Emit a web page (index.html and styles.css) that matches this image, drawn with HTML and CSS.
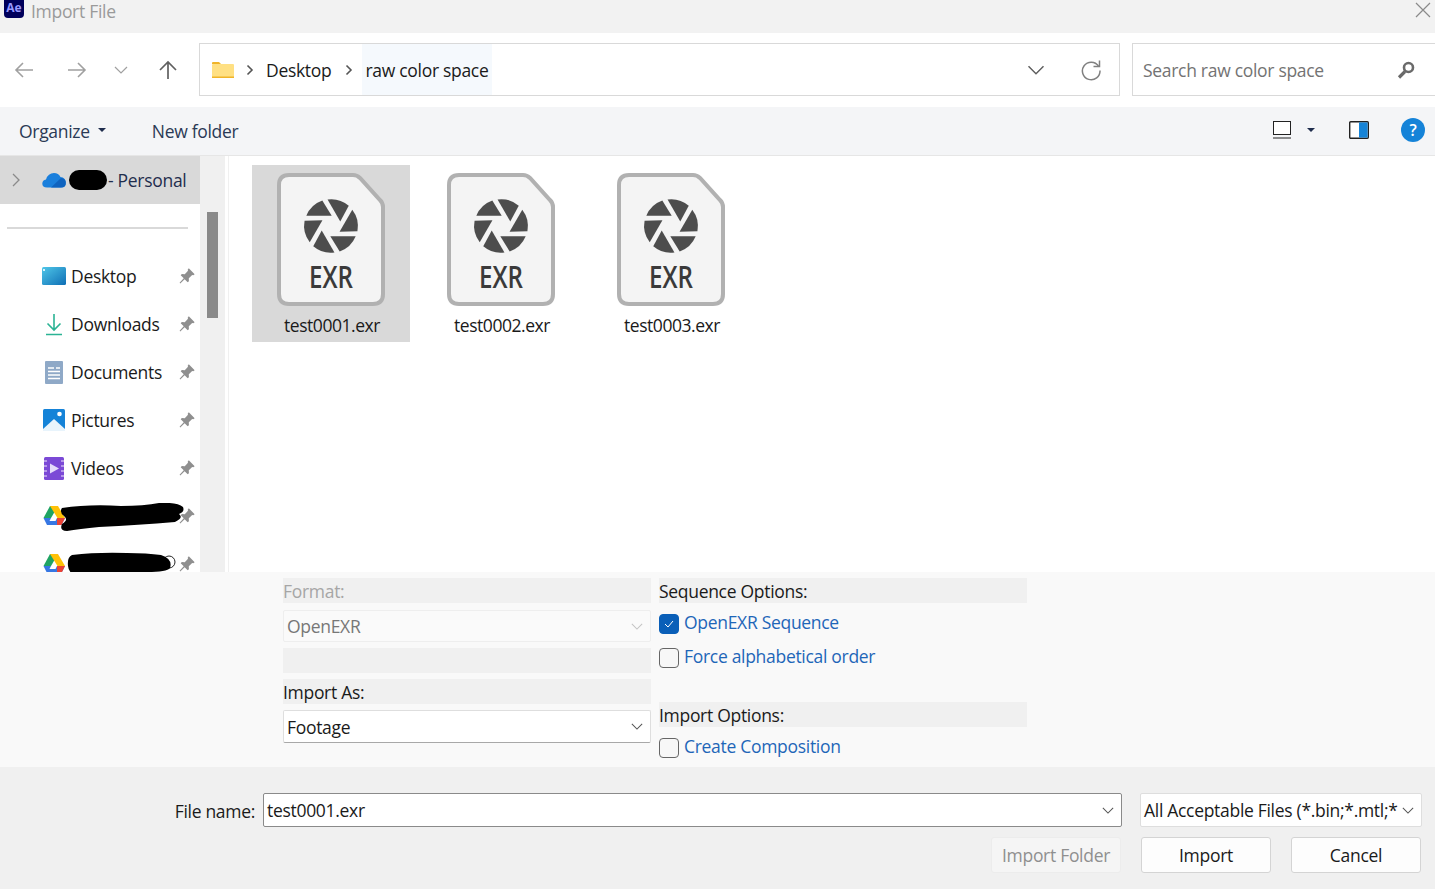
FILE: index.html
```html
<!DOCTYPE html>
<html lang="en">
<head>
    <meta charset="UTF-8">
    <title>Import File</title>
    <link rel="stylesheet" href="styles.css">
</head>
<body>
    <svg class="defs" width="0" height="0">
        <symbol id="pin" viewBox="0 0 16 16">
            <path d="M9.6 1.2 14.8 6.4 13.6 7.4 12.6 7.1 9.6 10 9.7 12.6 8.6 13.6 5.9 10.9 2 14.6 1.4 14 5.1 10.1 2.4 7.4 3.4 6.3 6 6.4 8.9 3.4 8.6 2.4Z" fill="#8f8f8f"/>
        </symbol>
        <symbol id="chev" viewBox="0 0 14 8">
            <path d="M1 1 7 7 13 1" fill="none" stroke="currentColor" stroke-width="1.2"/>
        </symbol>
        <symbol id="crumb" viewBox="0 0 8 12">
            <path d="M1.5 1.5 6 6 1.5 10.5" fill="none" stroke="#555" stroke-width="1.6"/>
        </symbol>
        <symbol id="drive" viewBox="0 0 24 22">
            <path d="M8 1h8L9 13H1.5Z" fill="#1fa463"/>
            <path d="M8 1h8l7 12h-7.500Z" fill="#ffc107"/>
            <path d="M1.500 13 5 20h5l3-7Z" fill="#3777e3"/>
            <path d="M5 20h14.500L23 13H9Z" fill="#3777e3"/>
            <path d="M15 13h8l-3.500 7H15Z" fill="#ea4335"/>
            <path d="M9 13h6l-1.500 3H7.500Z" fill="#fff"/>
        </symbol>
        <symbol id="exr" viewBox="0 0 108 133">
            <path d="M12 2H76Q80 2 83 5L103 27Q106 30 106 34V121Q106 131 96 131H12Q2 131 2 121V12Q2 2 12 2Z" fill="#f4f4f4" stroke="#b1b1b1" stroke-width="4"/>
            <g transform="translate(54 53)" fill="#4d4d4d">
                <path id="blade" d="M-24.700 -10.300A27 27 0 0 1 -8.700 -25.500L.7 -10.300Z"/>
                <use href="#blade" transform="rotate(60)"/>
                <use href="#blade" transform="rotate(120)"/>
                <use href="#blade" transform="rotate(180)"/>
                <use href="#blade" transform="rotate(240)"/>
                <use href="#blade" transform="rotate(300)"/>
            </g>
        </symbol>
    </svg>

    <header class="titlebar">
        <span class="ae-logo">Ae</span>
        <span class="title">Import File</span>
        <svg class="close" width="18" height="18" viewBox="0 0 18 18"><path d="M2 2 16 16M16 2 2 16" stroke="#8a8a8a" stroke-width="1.200"/></svg>
    </header>

    <div class="addressrow">
        <nav class="navbtns">
            <svg class="nav-back" width="20" height="18" viewBox="0 0 20 18"><path d="M19 9H2M9 2 2 9l7 7" fill="none" stroke="#a0a0a0" stroke-width="1.600"/></svg>
            <svg class="nav-fwd" width="20" height="18" viewBox="0 0 20 18"><path d="M1 9h17M11 2l7 7-7 7" fill="none" stroke="#a0a0a0" stroke-width="1.600"/></svg>
            <svg class="nav-drop" width="14" height="8"><use href="#chev" color="#a0a0a0"/></svg>
            <svg class="nav-up" width="20" height="20" viewBox="0 0 20 20"><path d="M10 19V2M2 10l8-8 8 8" fill="none" stroke="#606060" stroke-width="1.700"/></svg>
        </nav>
        <div class="addressbar">
            <svg class="folder" width="24" height="18" viewBox="0 0 24 18">
                <path d="M1 2q0-1 1-1h6l2 2h-9Z" fill="#f0b429"/>
                <rect x="1" y="3" width="22" height="14" rx="1" fill="#ffe083"/>
                <rect x="1" y="15.500" width="22" height="1.500" fill="#f0b429"/>
            </svg>
            <svg class="crumb-sep" width="8" height="12"><use href="#crumb"/></svg>
            <span class="crumb">Desktop</span>
            <svg class="crumb-sep" width="8" height="12"><use href="#crumb"/></svg>
            <span class="crumb crumb-current">raw color space</span>
            <svg class="addr-drop" width="18" height="10" viewBox="0 0 14 8"><use href="#chev" color="#606060"/></svg>
            <svg class="refresh" width="22" height="22" viewBox="0 0 22 22"><path d="M18.500 7A8.800 8.800 0 1 0 20 11.500" fill="none" stroke="#808080" stroke-width="1.500"/><path d="M19.500 1.500V7.500H13.500" fill="none" stroke="#808080" stroke-width="1.500"/></svg>
        </div>
        <div class="searchbar">
            <span>Search raw color space</span>
            <svg width="18" height="18" viewBox="0 0 18 18"><circle cx="11.500" cy="6.500" r="4.500" fill="none" stroke="#6a6a6a" stroke-width="2.600"/><path d="M8 10.500 2 16.500" stroke="#6a6a6a" stroke-width="3.200"/></svg>
        </div>
    </div>

    <div class="toolbar">
        <span class="tool organize">Organize</span>
        <span class="caret"></span>
        <span class="tool newfolder">New folder</span>
        <svg class="view-icon" width="18" height="18" viewBox="0 0 18 18"><rect x=".5" y=".5" width="17" height="13" fill="#fff" stroke="#222"/><path d="M0 17H18" stroke="#222"/></svg>
        <span class="caret view-caret"></span>
        <svg class="pane-icon" width="20" height="18" viewBox="0 0 20 18"><rect x=".7" y=".7" width="18.600" height="16.600" rx="1" fill="#fff" stroke="#222" stroke-width="1.400"/><rect x="10" y="1.400" width="8.600" height="15.200" fill="#1684d8"/></svg>
        <span class="help">?</span>
    </div>

    <main class="browser">
        <aside class="sidebar">
            <div class="side-row side-selected">
                <svg class="expander" width="8" height="14" viewBox="0 0 8 14"><path d="M1 1 7 7 1 13" fill="none" stroke="#8a8a8a" stroke-width="1.300"/></svg>
                <svg class="side-icon" width="24" height="16" viewBox="0 0 24 16"><path d="M5 15.500Q.2 15.500 .3 11.500 .5 8 4 7.500 6 1 12 1q4.500 0 6.500 4 5 .5 5.300 5.500.2 5-4.800 5Z" fill="#1a7fdc"/><path d="M9 15.500 19 6q5 .5 4.800 5 0 4.500-4.800 4.500Z" fill="#0f63bf"/></svg>
                <span class="redact-name"></span>
                <span class="side-label">- Personal</span>
            </div>
            <div class="side-sep"></div>
            <div class="side-row">
                <svg class="side-icon" width="24" height="18" viewBox="0 0 24 18"><defs><linearGradient id="desk" x1="0" y1="0" x2="1" y2="1"><stop offset="0" stop-color="#4fc6e8"/><stop offset="1" stop-color="#0f6fb5"/></linearGradient></defs><rect width="24" height="18" rx="1.500" fill="url(#desk)"/><rect x="1" y="2" width="2" height="2" fill="#d6f3fb"/></svg>
                <span class="side-label">Desktop</span>
                <svg class="pin" width="18" height="18"><use href="#pin"/></svg>
            </div>
            <div class="side-row">
                <svg class="side-icon" width="24" height="24" viewBox="0 0 24 24"><path d="M12 2V18M5.500 11.500 12 18l6.500-6.500M4 22.500H20" fill="none" stroke="#2bb394" stroke-width="1.600"/></svg>
                <span class="side-label">Downloads</span>
                <svg class="pin" width="18" height="18"><use href="#pin"/></svg>
            </div>
            <div class="side-row">
                <svg class="side-icon" width="24" height="24" viewBox="0 0 24 24"><rect x="3" y="1" width="18" height="23" rx="1" fill="#8fa9c7"/><path d="M6 8h6M14 8h4M6 11.500h12M6 15h12M6 18.500h12" stroke="#fff" stroke-width="1.300"/></svg>
                <span class="side-label">Documents</span>
                <svg class="pin" width="18" height="18"><use href="#pin"/></svg>
            </div>
            <div class="side-row">
                <svg class="side-icon" width="24" height="24" viewBox="0 0 24 24"><rect x="1" y="1" width="22" height="22" rx="1.500" fill="#1583d8"/><circle cx="17.500" cy="6" r="2.300" fill="#fff"/><path d="M1 21 12 11l11 10v2H1Z" fill="#e8f4fc"/></svg>
                <span class="side-label">Pictures</span>
                <svg class="pin" width="18" height="18"><use href="#pin"/></svg>
            </div>
            <div class="side-row">
                <svg class="side-icon" width="24" height="24" viewBox="0 0 24 24"><rect x="2" y="1" width="20" height="23" rx="1.500" fill="#7b49d6"/><path d="M2 5h3M2 10h3M2 15h3M2 20h3M19 5h3M19 10h3M19 15h3M19 20h3" stroke="#c9b2f0" stroke-width="1.500"/><path d="M8 7.500 17 12.500 8 17.500Z" fill="#e6dcfa"/></svg>
                <span class="side-label">Videos</span>
                <svg class="pin" width="18" height="18"><use href="#pin"/></svg>
            </div>
            <div class="side-row">
                <svg class="side-icon" width="24" height="22"><use href="#drive"/></svg>
                <svg class="pin" width="18" height="18"><use href="#pin"/></svg>
                <svg class="redact redact-a" width="126" height="28" viewBox="0 0 126 28"><path d="M3 5Q30 1 62 3 85 3 100 0 118 -1 124 4 126 9 120 11 125 15 116 19 80 22 40 24 20 26 8 28 0 28 3 21 10 17 5 13 0 9 3 5Z" fill="#000"/></svg>
            </div>
            <div class="side-row">
                <svg class="side-icon" width="24" height="22"><use href="#drive"/></svg>
                <svg class="pin" width="18" height="18"><use href="#pin"/></svg>
                <svg class="redact redact-b" width="112" height="24" viewBox="0 0 112 24"><circle cx="102" cy="10" r="6" fill="#fff" stroke="#222"/><path d="M5 3Q30 0 60 1 80 1 94 3 106 7 103 16 100 20 80 20 50 20 14 23 2 24 1 14 0 5 5 3Z" fill="#000"/></svg>
            </div>
        </aside>
        <div class="scrolltrack"><div class="scrollthumb"></div></div>
        <section class="files">
            <div class="file file-selected">
                <svg class="file-icon" width="108" height="133">
                    <use href="#exr"/>
                    <text x="54" y="115" text-anchor="middle" textLength="44" lengthAdjust="spacingAndGlyphs" class="exr-text">EXR</text>
                </svg>
                <span class="file-name">test0001.exr</span>
            </div>
            <div class="file">
                <svg class="file-icon" width="108" height="133">
                    <use href="#exr"/>
                    <text x="54" y="115" text-anchor="middle" textLength="44" lengthAdjust="spacingAndGlyphs" class="exr-text">EXR</text>
                </svg>
                <span class="file-name">test0002.exr</span>
            </div>
            <div class="file">
                <svg class="file-icon" width="108" height="133">
                    <use href="#exr"/>
                    <text x="54" y="115" text-anchor="middle" textLength="44" lengthAdjust="spacingAndGlyphs" class="exr-text">EXR</text>
                </svg>
                <span class="file-name">test0003.exr</span>
            </div>
        </section>
    </main>

    <section class="options">
        <div class="opt-col">
            <div class="opt-label opt-disabled">Format:</div>
            <div class="select select-disabled"><span>OpenEXR</span><svg width="12" height="7"><use href="#chev" color="#c4c4c4"/></svg></div>
            <div class="opt-label"></div>
            <div class="opt-label">Import As:</div>
            <div class="select"><span>Footage</span><svg width="12" height="7"><use href="#chev" color="#555"/></svg></div>
        </div>
        <div class="opt-col">
            <div class="opt-label">Sequence Options:</div>
            <div class="check-row check-first">
                <span class="checkbox checked"><svg width="12" height="10" viewBox="0 0 12 10"><path d="M2 5 5 8 10 2" fill="none" stroke="#fff" stroke-width="1"/></svg></span>
                <span class="check-label">OpenEXR Sequence</span>
            </div>
            <div class="check-row">
                <span class="checkbox"></span>
                <span class="check-label">Force alphabetical order</span>
            </div>
            <div class="opt-label import-options">Import Options:</div>
            <div class="check-row check-last">
                <span class="checkbox"></span>
                <span class="check-label">Create Composition</span>
            </div>
        </div>
    </section>

    <footer class="footer">
        <div class="name-row">
            <span class="name-label">File name:</span>
            <div class="name-input"><span>test0001.exr</span><svg width="12" height="7"><use href="#chev" color="#555"/></svg></div>
            <div class="filter"><span class="filter-text">All Acceptable Files (*.bin;*.mtl;*</span><svg width="12" height="7"><use href="#chev" color="#555"/></svg></div>
        </div>
        <div class="btn-row">
            <button class="btn btn-disabled">Import Folder</button>
            <button class="btn">Import</button>
            <button class="btn">Cancel</button>
        </div>
    </footer>
</body>
</html>
```

FILE: styles.css
```css
* {
    box-sizing: border-box;
}
html, body {
    height: 100%;
}
body {
    margin: 0;
    overflow: hidden;
    background: #fff;
    color: #1a1a1a;
    font-family: "Open Sans", "Noto Sans", sans-serif;
    font-size: 17.5px;
    letter-spacing: -0.3px;
}
.defs {
    position: absolute;
}

/* title bar */
.titlebar {
    display: flex;
    height: 33px;
    padding-left: 4px;
    background: #f2f2f2;
}
.ae-logo {
    width: 20px;
    height: 18px;
    border-radius: 0 0 4px 4px;
    background: #00005b;
    color: #9999ff;
    font-size: 12px;
    font-weight: 700;
    letter-spacing: 0;
    line-height: 16px;
    text-align: center;
}
.title {
    margin-left: 7px;
    color: #9a9a9a;
    line-height: 22px;
}
.close {
    margin: 1px 3px 0 auto;
}

/* address row */
.addressrow {
    display: flex;
    height: 74px;
    padding-top: 10px;
    padding-bottom: 11px;
}
.navbtns {
    display: flex;
    align-items: center;
    width: 199px;
    padding-left: 14px;
}
.nav-fwd {
    margin-left: 33px;
}
.nav-drop {
    margin-left: 27px;
}
.nav-up {
    margin-left: 30px;
}
.addressbar {
    display: flex;
    align-items: center;
    width: 921px;
    padding-left: 11px;
    border: 1px solid #d9d9d9;
}
.folder {
    flex: none;
}
.crumb-sep {
    margin-left: 11px;
}
.crumb {
    display: flex;
    align-items: center;
    height: 100%;
    padding: 0 3px 0 12px;
}
.crumb-current {
    padding: 0 4px 0 3px;
    margin-left: 9px;
    background: #f5f9fd;
}
.addr-drop {
    margin-left: auto;
    transform: translateX(-1px);
}
.refresh {
    margin: 0 17px 0 34px;
}
.searchbar {
    display: flex;
    align-items: center;
    flex: 1;
    margin-left: 12px;
    padding: 0 20px 0 10px;
    border: 1px solid #d9d9d9;
    border-right: none;
    color: #737373;
}
.searchbar svg {
    margin-left: auto;
}

/* toolbar */
.toolbar {
    display: flex;
    align-items: center;
    height: 49px;
    padding: 0 0 2px 19px;
    background: #f4f5f7;
    border-bottom: 1px solid #e6e6e6;
}
.tool {
    margin-top: 2px;
    color: #2b3a55;
}
.caret {
    width: 0;
    height: 0;
    margin-left: 8px;
    border: 4px solid transparent;
    border-top: 4px solid #1f2d4d;
    border-bottom: none;
}
.newfolder {
    margin-left: 46px;
}
.view-icon {
    margin-left: auto;
}
.view-caret {
    margin-left: 16px;
}
.pane-icon {
    margin-left: 34px;
}
.help {
    width: 24px;
    height: 24px;
    margin: 0 10px 0 32px;
    border-radius: 50%;
    background: #1583d8;
    color: #fff;
    font-size: 16px;
    font-weight: 600;
    line-height: 24px;
    text-align: center;
}

/* main browser area */
.browser {
    display: flex;
    height: 416px;
    overflow: hidden;
}
.sidebar {
    flex: none;
    width: 200px;
}
.side-row {
    position: relative;
    display: flex;
    align-items: center;
    height: 48px;
    padding: 0 4px 0 42px;
}
.side-selected {
    padding-left: 12px;
    background: #d9d9d9;
}
.expander {
    margin-right: 22px;
}
.side-icon {
    flex: none;
    width: 24px;
}
.side-label {
    margin-left: 5px;
}
.side-selected .side-label {
    margin-left: 1px;
    color: #1f2d4d;
}
.redact-name {
    width: 38px;
    height: 20px;
    margin-left: 3px;
    border-radius: 10px;
    background: #000;
}
.side-sep {
    width: 181px;
    height: 2px;
    margin: 23px 0 23px 7px;
    background: #d9d9d9;
}
.pin {
    margin-left: auto;
}
.redact {
    position: absolute;
}
.redact-a {
    left: 59px;
    top: 11px;
}
.redact-b {
    left: 67px;
    top: 12px;
}
.scrolltrack {
    flex: none;
    width: 25px;
    padding: 56px 7px 0;
    margin-right: 3px;
    background: #f0f0f0;
}
.scrollthumb {
    width: 11px;
    height: 106px;
    background: #8a8a8a;
}

/* files */
.files {
    display: flex;
    align-items: flex-start;
    flex: 1;
    gap: 12px;
    padding: 9px 0 0 23px;
    border-left: 1px solid #f0f0f0;
}
.file {
    display: flex;
    flex-direction: column;
    align-items: center;
    width: 158px;
    height: 177px;
    padding-top: 8px;
    color: #1a1a1a;
}
.file-selected {
    background: #d9d9d9;
}
.file-icon {
    flex: none;
}
.exr-text {
    font-family: "Open Sans", sans-serif;
    font-size: 30px;
    font-weight: 600;
    letter-spacing: 0;
    fill: #3a3a3a;
}
.file-name {
    margin: 7px 0 0 2px;
    letter-spacing: -0.45px;
}

/* import options */
.options {
    display: flex;
    gap: 8px;
    height: 195px;
    padding: 6px 0 0 283px;
    background: #f9f9f9;
}
.opt-col {
    display: flex;
    flex-direction: column;
    width: 368px;
}
.opt-label {
    flex: none;
    height: 25px;
    margin-bottom: 6px;
    background: #f0f0f0;
    line-height: 27px;
}
.opt-disabled {
    margin-bottom: 7px;
    color: #a6a6a6;
}
.select {
    display: flex;
    align-items: center;
    justify-content: space-between;
    height: 33px;
    margin-bottom: 6px;
    padding: 0 7px 0 3px;
    background: #fff;
    border: 1px solid #dedede;
    border-bottom-color: #a8a8a8;
    border-radius: 2px;
}
.select-disabled {
    height: 32px;
    background: #fafafa;
    border-color: #eeeeee;
    color: #777;
}
.check-row {
    display: flex;
    align-items: center;
    height: 20px;
    margin-bottom: 14px;
}
.check-first {
    margin-top: 5px;
}
.check-last {
    margin-top: 5px;
}
.import-options {
    margin-top: 20px;
    margin-bottom: 6px;
}
.checkbox {
    display: flex;
    align-items: center;
    justify-content: center;
    flex: none;
    width: 20px;
    height: 20px;
    border: 1px solid #666;
    border-radius: 4px;
    background: #f7f7f7;
}
.checked {
    background: #0a5fb8;
    border-color: #0a5fb8;
}
.check-label {
    margin: -4px 0 0 5px;
    color: #1e66b8;
}

/* footer */
.footer {
    height: 122px;
    padding-top: 26px;
    background: #f0f0f0;
}
.name-row {
    display: flex;
    height: 34px;
}
.name-label {
    width: 255px;
    line-height: 36px;
    text-align: right;
}
.name-input, .filter {
    display: flex;
    align-items: center;
    justify-content: space-between;
    height: 34px;
    padding: 0 7px 0 3px;
    background: #fff;
}
.name-input {
    width: 859px;
    margin-left: 8px;
    border: 1px solid #8a8a8a;
    border-radius: 2px;
}
.filter {
    width: 282px;
    margin-left: 18px;
    border: 1px solid #dedede;
    border-radius: 2px;
}
.filter-text {
    white-space: nowrap;
}
.btn-row {
    display: flex;
    justify-content: flex-end;
    gap: 20px;
    margin-top: 10px;
    padding-right: 14px;
}
.btn {
    width: 130px;
    height: 36px;
    padding: 0;
    background: #fdfdfd;
    border: 1px solid #d4d4d4;
    border-radius: 3px;
    color: #1a1a1a;
    font-family: inherit;
    font-size: 17.5px;
    letter-spacing: -0.3px;
}
.btn-disabled {
    background: #f5f5f5;
    border-color: #ececec;
    color: #8f8f8f;
}
```
